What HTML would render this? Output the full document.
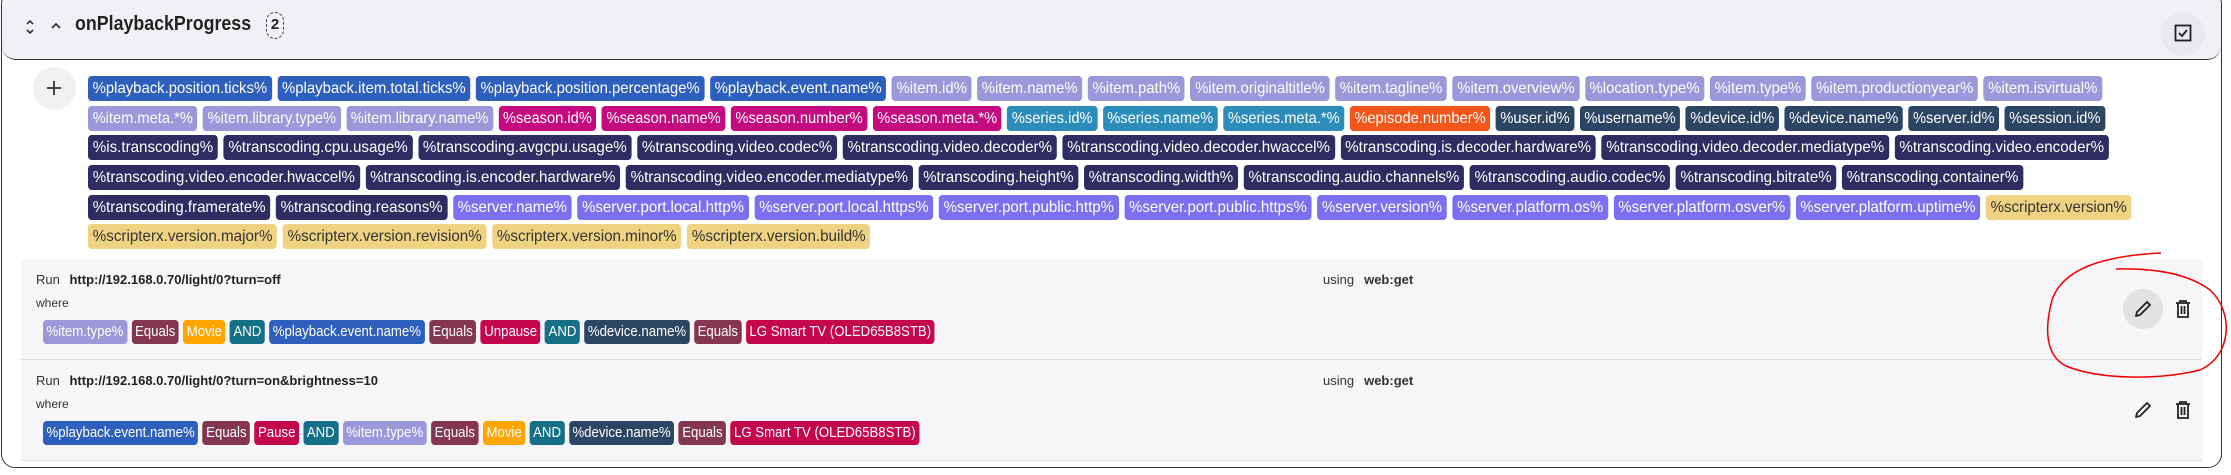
<!DOCTYPE html>
<html><head><meta charset="utf-8"><style>
*{box-sizing:border-box;margin:0;padding:0}
body{width:2231px;height:475px;background:#fff;font-family:"Liberation Sans",sans-serif;position:relative;overflow:hidden;color:#222}
.card{position:absolute;left:1px;top:-10px;width:2221px;height:478px;border:1.5px solid #333;border-radius:14px;overflow:hidden;background:#fff}
.head{position:absolute;left:0;top:0;width:100%;height:69px;background:#f0f0f5;border-bottom:1.5px solid #333;border-radius:0 0 14px 14px}
.title{position:absolute;left:73px;top:22px;font-size:20px;font-weight:bold;color:#222;transform:scaleX(.89);transform-origin:left}
.badge{position:absolute;left:264px;top:21px;width:18px;height:27px;border:1.5px dashed #444;border-radius:9px;font-size:15px;font-weight:bold;text-align:center;line-height:24px}
.row{position:absolute;left:88px;display:flex;gap:6px;white-space:nowrap;transform-origin:left top}
.t{display:inline-block;height:25px;line-height:25px;padding:0 5px;border-radius:4px;color:#fff;font-size:16px}
.b{background:#2e5fbd}.lp{background:#9a98d9}.m{background:#c40a7f}.s{background:#2c8dba}.o{background:#f2561a}.d{background:#2b4563}.n{background:#2e2c60}.p{background:#7c6ff0}.y{background:#efd382;color:#333}
.eq{background:#843651}.mv{background:#ffa500}.and{background:#146f87}.r{background:#c4064b}
.rule{position:absolute;left:21px;width:2181px;background:#f6f6f8;border-bottom:1.5px solid #ddd}
.rule .run{position:absolute;left:15px;font-size:13px;color:#333}
.rule .run b{font-weight:bold;color:#222;margin-left:6px}
.rule .where{position:absolute;left:15px;font-size:12px;color:#333}
.rule .row{left:22px;transform:scaleX(.88);gap:5px}
.rule .t{font-size:15px;height:24px;line-height:24px;padding:0 4px}
.using{position:absolute;left:1302px;font-size:13px;color:#333}
.using b{margin-left:10px}
</style></head><body>
<div class="card">
<div class="head">
<svg style="position:absolute;left:22px;top:27px" width="12" height="18" viewBox="0 0 12 18"><path d="M3 6l3-3 3 3M3 12l3 3 3-3" stroke="#333" stroke-width="1.6" fill="none"/></svg>
<svg style="position:absolute;left:48px;top:30px" width="12" height="10" viewBox="0 0 12 10"><path d="M2 7l4-4 4 4" stroke="#333" stroke-width="1.8" fill="none"/></svg>
<div class="title">onPlaybackProgress</div>
<div class="badge">2</div>
<div style="position:absolute;left:2159px;top:21px;width:44px;height:44px;border-radius:50%;background:#e8e8ee"></div>
<svg style="position:absolute;left:2172px;top:33px" width="18" height="18" viewBox="0 0 18 18"><rect x="1.5" y="1.5" width="15" height="15" fill="none" stroke="#222" stroke-width="1.8"/><path d="M5 9l3 3 5-6" fill="none" stroke="#222" stroke-width="1.8"/></svg>
</div>
</div>
<div style="position:absolute;left:33px;top:67px;width:43px;height:43px;border-radius:50%;background:#f0f0f3"></div>
<svg style="position:absolute;left:47px;top:81px" width="14" height="14"><path d="M7 0v14M0 7h14" stroke="#333" stroke-width="1.8"/></svg>
<div class="tags">
<div class="row" style="top:76px;transform:scaleX(.930)"><span class="t b">%playback.position.ticks%</span><span class="t b">%playback.item.total.ticks%</span><span class="t b">%playback.position.percentage%</span><span class="t b">%playback.event.name%</span><span class="t lp">%item.id%</span><span class="t lp">%item.name%</span><span class="t lp">%item.path%</span><span class="t lp">%item.originaltitle%</span><span class="t lp">%item.tagline%</span><span class="t lp">%item.overview%</span><span class="t lp">%location.type%</span><span class="t lp">%item.type%</span><span class="t lp">%item.productionyear%</span><span class="t lp">%item.isvirtual%</span></div>
<div class="row" style="top:106px;transform:scaleX(.917)"><span class="t lp">%item.meta.*%</span><span class="t lp">%item.library.type%</span><span class="t lp">%item.library.name%</span><span class="t m">%season.id%</span><span class="t m">%season.name%</span><span class="t m">%season.number%</span><span class="t m">%season.meta.*%</span><span class="t s">%series.id%</span><span class="t s">%series.name%</span><span class="t s">%series.meta.*%</span><span class="t o">%episode.number%</span><span class="t d">%user.id%</span><span class="t d">%username%</span><span class="t d">%device.id%</span><span class="t d">%device.name%</span><span class="t d">%server.id%</span><span class="t d">%session.id%</span></div>
<div class="row" style="top:135px;transform:scaleX(.947)"><span class="t n">%is.transcoding%</span><span class="t n">%transcoding.cpu.usage%</span><span class="t n">%transcoding.avgcpu.usage%</span><span class="t n">%transcoding.video.codec%</span><span class="t n">%transcoding.video.decoder%</span><span class="t n">%transcoding.video.decoder.hwaccel%</span><span class="t n">%transcoding.is.decoder.hardware%</span><span class="t n">%transcoding.video.decoder.mediatype%</span><span class="t n">%transcoding.video.encoder%</span></div>
<div class="row" style="top:165px;transform:scaleX(.945)"><span class="t n">%transcoding.video.encoder.hwaccel%</span><span class="t n">%transcoding.is.encoder.hardware%</span><span class="t n">%transcoding.video.encoder.mediatype%</span><span class="t n">%transcoding.height%</span><span class="t n">%transcoding.width%</span><span class="t n">%transcoding.audio.channels%</span><span class="t n">%transcoding.audio.codec%</span><span class="t n">%transcoding.bitrate%</span><span class="t n">%transcoding.container%</span></div>
<div class="row" style="top:195px;transform:scaleX(.939)"><span class="t n">%transcoding.framerate%</span><span class="t n">%transcoding.reasons%</span><span class="t p">%server.name%</span><span class="t p">%server.port.local.http%</span><span class="t p">%server.port.local.https%</span><span class="t p">%server.port.public.http%</span><span class="t p">%server.port.public.https%</span><span class="t p">%server.version%</span><span class="t p">%server.platform.os%</span><span class="t p">%server.platform.osver%</span><span class="t p">%server.platform.uptime%</span><span class="t y">%scripterx.version%</span></div>
<div class="row" style="top:224px;transform:scaleX(.949)"><span class="t y">%scripterx.version.major%</span><span class="t y">%scripterx.version.revision%</span><span class="t y">%scripterx.version.minor%</span><span class="t y">%scripterx.version.build%</span></div>
</div>

<div class="rule" style="top:259px;height:101px">
<div class="run" style="top:13px">Run <b>http://192.168.0.70/light/0?turn=off</b></div>
<div class="where" style="top:37px">where</div>
<div class="row" style="top:61px"><span class="t lp">%item.type%</span><span class="t eq">Equals</span><span class="t mv">Movie</span><span class="t and">AND</span><span class="t b">%playback.event.name%</span><span class="t eq">Equals</span><span class="t r">Unpause</span><span class="t and">AND</span><span class="t d">%device.name%</span><span class="t eq">Equals</span><span class="t r">LG Smart TV (OLED65B8STB)</span></div>
<div class="using" style="top:13px">using<b>web:get</b></div>
<div style="position:absolute;left:2102px;top:30px;width:40px;height:40px;border-radius:50%;background:#e2e2e4"></div>
<svg style="position:absolute;left:2113px;top:41px" width="18" height="18" viewBox="0 0 18 18"><path d="M2 16l1-4L13 2l3 3L6 15z" fill="none" stroke="#222" stroke-width="1.8" stroke-linejoin="round"/></svg>
<svg style="position:absolute;left:2154px;top:41px" width="16" height="18" viewBox="0 0 16 18"><path d="M1 3h14M5 3V1h6v2M3 3v14h10V3M6.5 6v8M9.5 6v8" fill="none" stroke="#222" stroke-width="1.8"/></svg>
</div>
<div class="rule" style="top:360px;height:101px;background:#f6f6f8">
<div class="run" style="top:13px">Run <b>http://192.168.0.70/light/0?turn=on&amp;brightness=10</b></div>
<div class="where" style="top:37px">where</div>
<div class="row" style="top:61px"><span class="t b">%playback.event.name%</span><span class="t eq">Equals</span><span class="t r">Pause</span><span class="t and">AND</span><span class="t lp">%item.type%</span><span class="t eq">Equals</span><span class="t mv">Movie</span><span class="t and">AND</span><span class="t d">%device.name%</span><span class="t eq">Equals</span><span class="t r">LG Smart TV (OLED65B8STB)</span></div>
<div class="using" style="top:13px">using<b>web:get</b></div>
<svg style="position:absolute;left:2113px;top:41px" width="18" height="18" viewBox="0 0 18 18"><path d="M2 16l1-4L13 2l3 3L6 15z" fill="none" stroke="#222" stroke-width="1.8" stroke-linejoin="round"/></svg>
<svg style="position:absolute;left:2154px;top:41px" width="16" height="18" viewBox="0 0 16 18"><path d="M1 3h14M5 3V1h6v2M3 3v14h10V3M6.5 6v8M9.5 6v8" fill="none" stroke="#222" stroke-width="1.8"/></svg>
</div>
<svg style="position:absolute;left:0;top:0" width="2231" height="475"><path d="M2161 253C2100 256 2062 270 2052 300C2044 330 2046 356 2066 366C2100 380 2160 380 2200 370C2232 356 2234 312 2210 290C2190 275 2160 268 2116 269" fill="none" stroke="#e00" stroke-width="1.5"/></svg>
</body></html>
